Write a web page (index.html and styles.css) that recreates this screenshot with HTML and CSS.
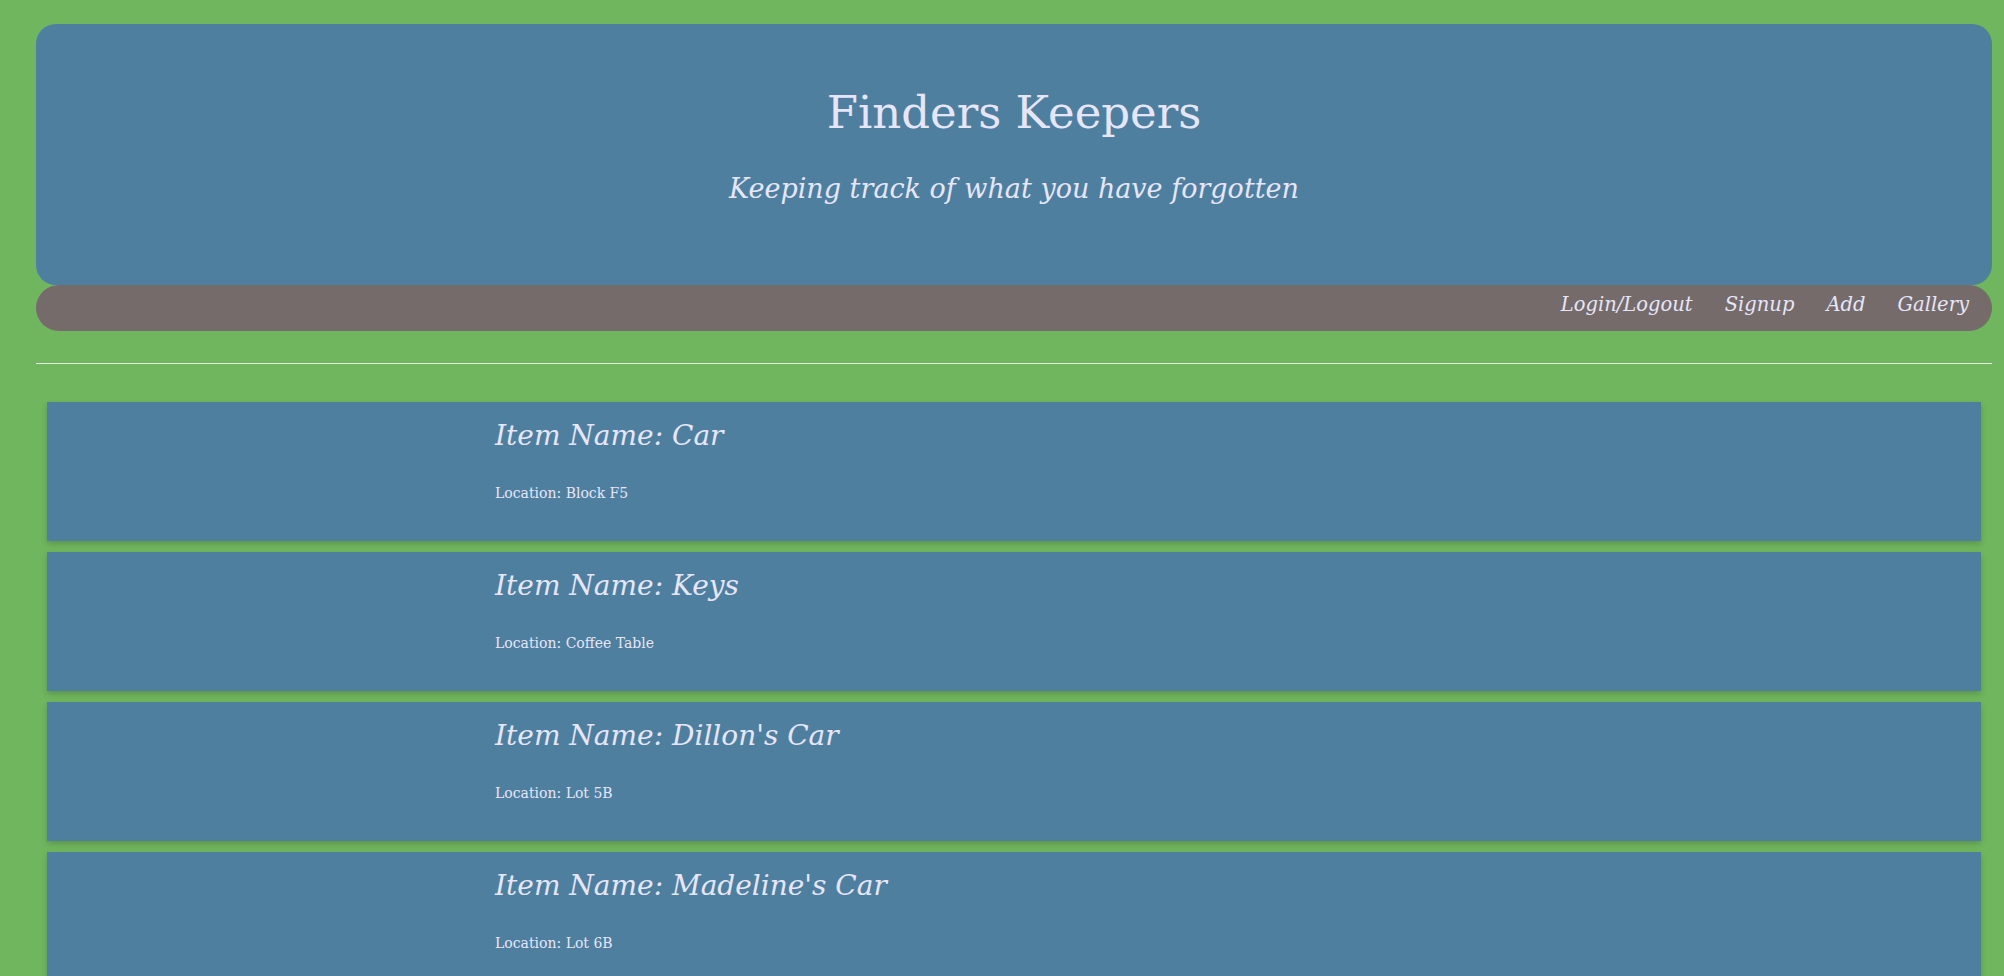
FILE: index.html
```html
<!DOCTYPE html>
<html lang="en">
<head>
<meta charset="utf-8">
<title>Finders Keepers</title>
<link rel="stylesheet" href="styles.css">
</head>
<body>
  <header class="banner">
    <h1 class="banner-title">Finders Keepers</h1>
    <p class="banner-tagline">Keeping track of what you have forgotten</p>
  </header>
  <nav class="nav">
    <a class="nav-link" href="#">Login/Logout</a>
    <a class="nav-link" href="#">Signup</a>
    <a class="nav-link" href="#">Add</a>
    <a class="nav-link" href="#">Gallery</a>
  </nav>
  <hr class="rule">
  <main class="items">
    <article class="card">
      <div class="card-media"></div>
      <div class="card-body">
        <h2 class="card-title">Item Name: Car</h2>
        <p class="card-location">Location: Block F5</p>
      </div>
    </article>
    <article class="card">
      <div class="card-media"></div>
      <div class="card-body">
        <h2 class="card-title">Item Name: Keys</h2>
        <p class="card-location">Location: Coffee Table</p>
      </div>
    </article>
    <article class="card">
      <div class="card-media"></div>
      <div class="card-body">
        <h2 class="card-title">Item Name: Dillon's Car</h2>
        <p class="card-location">Location: Lot 5B</p>
      </div>
    </article>
    <article class="card">
      <div class="card-media"></div>
      <div class="card-body">
        <h2 class="card-title">Item Name: Madeline's Car</h2>
        <p class="card-location">Location: Lot 6B</p>
      </div>
    </article>
  </main>
</body>
</html>
```
FILE: styles.css
```css
html, body {
  margin: 0;
}
body {
  background: #70b65e;
  color: #e6e6fa;
  font-family: Georgia, "DejaVu Serif", serif;
  padding: 24px 12px 0 36px;
}
.banner {
  background: #4f7f9f;
  border-radius: 20px;
  height: 261px;
  box-sizing: border-box;
  padding-top: 61px;
  text-align: center;
}
.banner-title {
  margin: 0;
  font-weight: normal;
  font-size: 45px;
  line-height: 56px;
}
.banner-tagline {
  margin: 30px 0 0;
  font-style: italic;
  font-size: 27px;
  line-height: 36px;
}
.nav {
  background: #756b6a;
  border-radius: 23px;
  height: 46px;
  box-sizing: border-box;
  display: flex;
  justify-content: flex-end;
  align-items: center;
  gap: 32px;
  padding: 0 23px 8px 0;
}
.nav-link {
  color: #e6e6fa;
  text-decoration: none;
  font-style: italic;
  font-size: 19.5px;
}
.rule {
  margin: 32px 0 0;
  border: 0;
  border-top: 1px solid #e3ecdf;
  height: 0;
}
.items {
  display: flex;
  flex-direction: column;
  gap: 11px;
  padding: 38px 11px 0;
}
.card {
  display: flex;
  background: #4f7f9f;
  height: 139px;
  box-shadow: 0 3px 6px rgba(0, 0, 0, 0.18);
}
.card-media {
  width: 448px;
  flex: none;
}
.card-body {
  padding-top: 14px;
}
.card-title {
  margin: 0;
  font-weight: normal;
  font-style: italic;
  font-size: 28px;
  line-height: 40px;
}
.card-location {
  margin: 29px 0 0;
  font-size: 14px;
  line-height: 16px;
}
```
